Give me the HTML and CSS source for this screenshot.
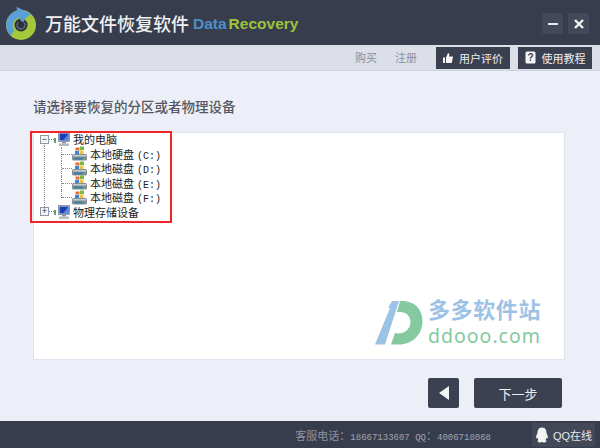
FILE: index.html
```html
<!DOCTYPE html>
<html lang="zh-CN">
<head>
  <meta charset="UTF-8" />
  <title>万能文件恢复软件</title>
  <link rel="stylesheet" href="styles.css">
</head>
<body>
  <div class="app">
    <!-- Title bar -->
    <header class="titlebar">
      <svg class="logo" width="32" height="34" viewBox="0 0 32 34">
        <circle cx="16" cy="19" r="15" fill="#a3c83c"/>
        <path d="M5.5 29.5 A15 15 0 0 1 12 4.5 L11.5 0.8 L26 8 L15.5 16 L15 11.5 A8 8 0 0 0 9.5 24.5 Z" fill="#5a9fd8"/>
        <circle cx="16" cy="19" r="6.5" fill="#2c3140"/>
        <path d="M15 11 L20 9 L19 16 L15.5 15 Z" fill="#5a9fd8"/>
        <path d="M13 16.5 A4 4 0 1 0 19 16.5" fill="none" stroke="#8d9aa6" stroke-width="0.8"/>
      </svg>
      <span class="app-name">万能文件恢复软件</span>
      <span class="brand"><span class="brand-data">Data</span><span class="brand-recovery">Recovery</span></span>
      <div class="win-btns">
        <button class="win-btn"><span class="min-bar"></span></button>
        <button class="win-btn">
          <svg width="10" height="10" viewBox="0 0 10 10"><path d="M1 1 L9 9 M9 1 L1 9" stroke="#f2f3f5" stroke-width="2.4"/></svg>
        </button>
      </div>
    </header>

    <!-- Toolbar -->
    <nav class="toolbar">
      <a class="tool-link">购买</a>
      <a class="tool-link">注册</a>
      <button class="tool-btn">
        <svg width="10" height="10" viewBox="0 0 10 10"><path d="M0 4.5 H2 V10 H0 Z M3 4.5 L5 0 C6.5 0 6.6 1.5 6 3.6 H10 L8.8 10 H3 Z" fill="#f5f5f5"/></svg>
        用户评价
      </button>
      <button class="tool-btn">
        <svg width="11" height="13" viewBox="0 0 11 13"><rect x="0.5" y="0.5" width="10" height="12" rx="1.5" fill="#f5f5f5"/><text x="5.5" y="10" class="help-mark">?</text></svg>
        使用教程
      </button>
    </nav>

    <!-- Main content -->
    <main class="content">
      <h1 class="prompt">请选择要恢复的分区或者物理设备</h1>
      <div class="panel">
        <ul class="tree">
          <li class="tree-row">
            <span class="expander">−</span><span class="stub"></span><span class="plug"></span>
            <svg class="pc-icon" width="12" height="14" viewBox="0 0 12 14"><use href="#pc"/></svg>
            <span>我的电脑</span>
          </li>
          <li class="tree-row child">
            <span class="elbow"></span>
            <svg width="15" height="15" viewBox="0 0 15 15"><use href="#disk"/></svg>
            <span>本地硬盘 <span class="drive">(C:)</span></span>
          </li>
          <li class="tree-row child">
            <span class="elbow"></span>
            <svg width="15" height="15" viewBox="0 0 15 15"><use href="#disk"/></svg>
            <span>本地磁盘 <span class="drive">(D:)</span></span>
          </li>
          <li class="tree-row child">
            <span class="elbow"></span>
            <svg width="15" height="15" viewBox="0 0 15 15"><use href="#disk"/></svg>
            <span>本地磁盘 <span class="drive">(E:)</span></span>
          </li>
          <li class="tree-row child">
            <span class="elbow"></span>
            <svg width="15" height="15" viewBox="0 0 15 15"><use href="#disk"/></svg>
            <span>本地磁盘 <span class="drive">(F:)</span></span>
          </li>
          <li class="tree-row">
            <span class="expander">+</span><span class="stub"></span><span class="plug"></span>
            <svg class="pc-icon" width="12" height="14" viewBox="0 0 12 14"><use href="#pc"/></svg>
            <span>物理存储设备</span>
          </li>
        </ul>
        <div class="red-box"></div>
        <div class="watermark">
          <svg width="48" height="45" viewBox="0 0 48 45">
            <path d="M0 44.5 L15 8 L13 8 L17 1 L24 1 L10 44.5 Z" fill="#9cc2e6"/>
            <path d="M25 1 C40 0 47.5 10 47.5 21 C47.5 35 37 44.5 24 44.5 L16 44.5 L20 33 C29 35 35.5 29 35.5 22 C35.5 16 31 12 25 12 L22 12 Z" fill="#84c9a0"/>
          </svg>
          <div class="wm-text">
            <span class="wm-cn">多多软件站</span>
            <span class="wm-en">ddooo.com</span>
          </div>
        </div>
      </div>
      <div class="actions">
        <button class="nav-btn back"><span class="arrow"></span></button>
        <button class="nav-btn next">下一步</button>
      </div>
    </main>

    <!-- Footer -->
    <footer class="statusbar">
      <span class="contact">客服电话：<span class="num">18667133607 QQ</span>：<span class="num">4006718068</span></span>
      <button class="qq-btn">
        <svg width="14" height="16" viewBox="0 0 14 16"><path d="M7 0.5 C10.5 0.5 11.5 3.5 11.5 6 C12.5 8 13.5 10 12.5 11.5 L11.5 10.8 C11.3 11.8 11 12.3 10.5 13 C12 13.5 11.5 15.5 9 15.5 C8 15.5 7.5 15 7 15 C6.5 15 6 15.5 5 15.5 C2.5 15.5 2 13.5 3.5 13 C3 12.3 2.7 11.8 2.5 10.8 L1.5 11.5 C0.5 10 1.5 8 2.5 6 C2.5 3.5 3.5 0.5 7 0.5 Z" fill="#f4f4f4"/></svg>
        QQ在线
      </button>
    </footer>
  </div>

  <!-- Shared tree icons -->
  <svg class="defs" width="0" height="0">
    <defs>
      <g id="pc">
        <rect x="0.5" y="0.5" width="11" height="9" fill="#d8dce4" stroke="#7a8496" stroke-width="0.8"/>
        <rect x="1.5" y="1.5" width="9" height="7" fill="#1a3cb4"/>
        <path d="M5 8.5 L10.5 1.5 V8.5 Z" fill="#5c86d8"/>
        <rect x="4" y="10" width="4" height="1.5" fill="#8a93a4"/>
        <rect x="1" y="11.5" width="10" height="2.5" fill="#b4bac4"/>
      </g>
      <g id="disk">
        <rect x="3.5" y="1.5" width="4" height="3" fill="#e0703a"/>
        <rect x="8" y="0.5" width="4" height="3.5" fill="#7cb83c"/>
        <rect x="3" y="5" width="4" height="3" fill="#3d83d6"/>
        <rect x="7.5" y="4.5" width="4" height="3.5" fill="#eec23e"/>
        <rect x="0" y="8" width="15" height="6.5" rx="1.5" fill="#858f92"/>
        <rect x="1" y="9" width="13" height="1.5" fill="#c3ccce"/>
        <rect x="2" y="11.5" width="9" height="2" fill="#3f7f9c"/>
      </g>
    </defs>
  </svg>
</body>
</html>
```

FILE: styles.css
```css
* {
  margin: 0;
  padding: 0;
  box-sizing: border-box;
  font-family: "Liberation Sans", "Noto Sans CJK SC", sans-serif;
}

html, body {
  width: 600px;
  height: 448px;
  overflow: hidden;
}

button {
  border: none;
}

.defs {
  display: block;
}

.app {
  width: 600px;
  height: 448px;
  display: flex;
  flex-direction: column;
  background: #eceff8;
}

.titlebar {
  height: 45px;
  flex: none;
  display: flex;
  align-items: center;
  padding: 0 11px 0 5px;
  background: #383d4d;
}

.logo {
  margin-right: 8px;
}

.app-name {
  font-size: 18px;
  font-weight: 500;
  color: #f0f1f3;
}

.brand {
  margin-left: 4px;
  margin-top: 3px;
  font-size: 15.5px;
  font-weight: bold;
}

.brand-data {
  color: #4e8fc9;
  margin-right: 2px;
}

.brand-recovery {
  color: #9cc43a;
}

.win-btns {
  margin-left: auto;
  margin-top: 2px;
  display: flex;
  gap: 5px;
}

.win-btn {
  width: 21px;
  height: 21px;
  display: flex;
  align-items: center;
  justify-content: center;
  background: #444959;
  border-radius: 2px;
}

.min-bar {
  width: 10px;
  height: 2px;
  background: #e8e9ec;
}

.toolbar {
  height: 26px;
  flex: none;
  display: flex;
  align-items: center;
  justify-content: flex-end;
  padding: 0 8px 1px 0;
  background: #dcdfe8;
  border-bottom: 1px solid #cfd2dc;
}

.tool-link {
  font-size: 11px;
  color: #8b8f9b;
  margin-right: 18px;
}

.tool-link + .tool-link {
  margin-right: 19px;
}

.tool-btn {
  width: 74px;
  height: 22px;
  margin-top: 1px;
  display: flex;
  align-items: center;
  justify-content: center;
  gap: 6px;
  font-size: 11px;
  color: #eceef0;
  background: #3b4050;
}

.tool-btn + .tool-btn {
  margin-left: 8px;
}

.help-mark {
  font-size: 10px;
  font-weight: bold;
  fill: #3b4050;
  text-anchor: middle;
}

.content {
  flex: 1;
  display: flex;
  flex-direction: column;
  padding: 29px 35px 0 33px;
}

.prompt {
  font-size: 13.5px;
  line-height: 16px;
  font-weight: 500;
  color: #555862;
  margin-bottom: 16px;
}

.panel {
  position: relative;
  height: 228px;
  background: #fff;
  border: 1px solid #e0e4ee;
}

.tree {
  list-style: none;
  padding: 0 0 0 6px;
  position: relative;
  margin-top: -1px;
}

/* dotted trunk joining the two root nodes */
.tree::before {
  content: "";
  position: absolute;
  left: 10px;
  top: 13px;
  height: 62px;
  border-left: 1px dotted #888;
}

.tree-row {
  height: 14.5px;
  display: flex;
  align-items: center;
  font-size: 11px;
  color: #222;
  white-space: nowrap;
}

.drive {
  font-family: "Liberation Mono", monospace;
  font-size: 10px;
}

.expander {
  width: 9px;
  height: 9px;
  flex: none;
  display: flex;
  align-items: center;
  justify-content: center;
  font-size: 9px;
  line-height: 9px;
  color: #333;
  background: #f4f5f7;
  border: 1px solid #8f97a6;
  position: relative;
  z-index: 1;
}

.stub {
  width: 5px;
  border-top: 1px dotted #888;
}

.plug {
  width: 2px;
  height: 5px;
  margin-top: 2px;
  margin-right: 2px;
  background: #5fa36a;
}

.pc-icon {
  margin-right: 3px;
}

.child {
  padding-left: 21px;
}

.child svg {
  margin-right: 3px;
}

.elbow {
  width: 11px;
  height: 14.5px;
  flex: none;
  border-left: 1px dotted #888;
  position: relative;
}

.elbow::after {
  content: "";
  position: absolute;
  left: 0;
  right: 0;
  top: 7px;
  border-top: 1px dotted #888;
}

.child:nth-child(5) .elbow {
  height: 8px;
  align-self: flex-start;
}

.red-box {
  position: absolute;
  left: -4px;
  top: -2px;
  width: 142px;
  height: 92px;
  border: 2px solid #f0252a;
}

.watermark {
  position: absolute;
  left: 341px;
  top: 167px;
  display: flex;
  align-items: flex-start;
  gap: 5px;
}

.wm-text {
  display: flex;
  flex-direction: column;
  gap: 4px;
}

.wm-cn {
  font-size: 22px;
  line-height: 22px;
  font-weight: bold;
  letter-spacing: 0.6px;
  color: #9cc2e6;
}

.wm-en {
  font-size: 19.5px;
  line-height: 20px;
  letter-spacing: 1px;
  color: #84c9a0;
  font-family: "Noto Sans", sans-serif;
}

.actions {
  display: flex;
  justify-content: flex-end;
  gap: 15px;
  margin-top: 18px;
  padding-right: 3px;
}

.nav-btn {
  height: 30px;
  display: flex;
  align-items: center;
  justify-content: center;
  background: #3c4151;
  border-radius: 2px;
  color: #eceef0;
  font-size: 13px;
}

.back {
  width: 31px;
}

.arrow {
  border-right: 10px solid #f2f3f5;
  border-top: 7px solid transparent;
  border-bottom: 7px solid transparent;
}

.next {
  width: 88px;
}

.statusbar {
  height: 27px;
  flex: none;
  display: flex;
  align-items: center;
  justify-content: flex-end;
  padding-right: 5px;
  background: #383d4d;
}

.contact {
  font-size: 11px;
  color: #8e929e;
  margin-right: 41px;
}

.num {
  font-family: "Liberation Mono", monospace;
  font-size: 9px;
  color: #a0a4af;
}

.qq-btn {
  width: 63px;
  height: 24px;
  display: flex;
  align-items: center;
  justify-content: center;
  gap: 4px;
  font-size: 11px;
  color: #e6e7ea;
  background: #434858;
}
```
